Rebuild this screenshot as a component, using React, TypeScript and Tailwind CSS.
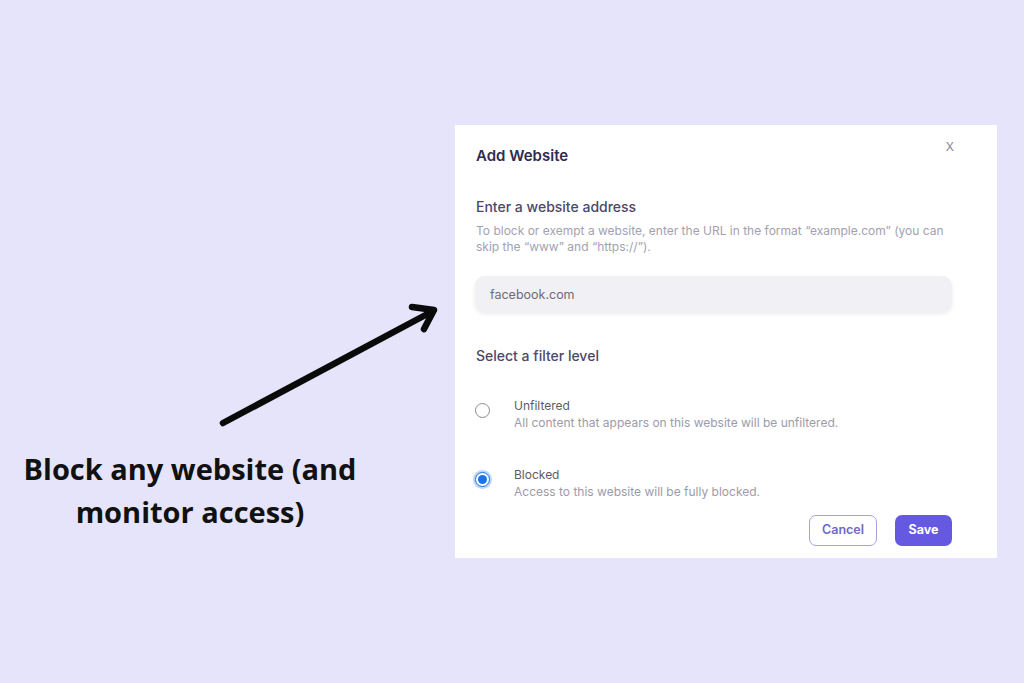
import { useState } from 'react'

interface FilterOption {
    id: string
    label: string
    description: string
}

const options: FilterOption[] = [
    { id: 'unfiltered', label: 'Unfiltered', description: 'All content that appears on this website will be unfiltered.' },
    { id: 'blocked', label: 'Blocked', description: 'Access to this website will be fully blocked.' }
]

function Radio({ checked }: { checked: boolean }) {
    if (checked) {
        return (
            <span className="flex items-center justify-center w-[15px] h-[15px] rounded-full border-[1.5px] border-[#1a73e8] bg-white ring-2 ring-[#bcd6fb]">
                <span className="w-[9px] h-[9px] rounded-full bg-[#1a73e8]" />
            </span>
        )
    }
    return <span className="block w-[15px] h-[15px] rounded-full border-[1.5px] border-[#8c8c94] bg-white" />
}

export default function App() {
    const [level, setLevel] = useState('blocked')
    const [url, setUrl] = useState('facebook.com')

    return (
        <div className="w-[1024px] h-[683px] bg-[#e6e4fa] flex overflow-hidden" style={{ fontFamily: 'Inter, "Noto Sans", sans-serif' }}>
            {/* Left: arrow + caption */}
            <div className="w-[455px] shrink-0 flex flex-col pt-[300px]">
                <svg width="455" height="132" viewBox="0 300 455 132" className="block">
                    <g stroke="#0a0a0a" strokeWidth="6.5" strokeLinecap="round" strokeLinejoin="round" fill="none">
                        <line x1="223" y1="423" x2="433" y2="311" />
                        <polyline points="412,307 434,310 424,329" />
                    </g>
                </svg>
                <p
                    className="w-[380px] mt-[15px] text-center text-[29px] leading-[43px] font-bold text-[#111]"
                    style={{ fontFamily: '"Open Sans", sans-serif' }}
                >
                    Block any website (and
                    <br />
                    monitor access)
                </p>
            </div>

            {/* Dialog */}
            <div className="mt-[125px] w-[542px] h-[433px] bg-white shrink-0 pl-[20px] pt-[20px]">
                <div className="w-[477px] flex flex-col">
                    <div className="flex items-start justify-between">
                        <h2 className="pl-[1px] text-[15px] leading-[22px] font-semibold text-[#2f2b4f]">Add Website</h2>
                        <button className="-mt-[5px] -mr-[2px] text-[12px] leading-[14px] text-[#8a8996]">X</button>
                    </div>

                    <h3 className="mt-[30px] pl-[1px] text-[14px] leading-[20px] font-medium text-[#4b4869]">
                        Enter a website address
                    </h3>
                    <p className="mt-[6px] pl-[1px] pr-[8px] text-[12px] leading-[16px] text-[#a3a1b0]">
                        To block or exempt a website, enter the URL in the format “example.com” (you can skip the “www” and “https://”).
                    </p>

                    <input
                        value={url}
                        onChange={(e) => setUrl(e.target.value)}
                        className="mt-[21px] h-[36px] w-full rounded-[10px] bg-[#f0f0f5] px-[15px] text-[12.5px] text-[#6e6c7c] shadow-[0_2px_4px_rgba(0,0,0,0.08)] outline-none"
                    />

                    <h3 className="mt-[34px] pl-[1px] text-[14px] leading-[20px] font-medium text-[#4b4869]">
                        Select a filter level
                    </h3>

                    {options.map((opt, i) => (
                        <label
                            key={opt.id}
                            onClick={() => setLevel(opt.id)}
                            className={`flex items-start cursor-pointer ${i === 0 ? 'mt-[31px]' : 'mt-[35px]'}`}
                        >
                            <span className="mt-[6px] w-[15px] flex justify-center">
                                <Radio checked={level === opt.id} />
                            </span>
                            <span className="ml-[24px] flex flex-col">
                                <span className="text-[12px] leading-[17px] text-[#5c5b68]">{opt.label}</span>
                                <span className="text-[12px] leading-[17px] text-[#9d9ba8]">{opt.description}</span>
                            </span>
                        </label>
                    ))}

                    <div className="mt-[15px] flex justify-end gap-[18px]">
                        <button className="h-[31px] w-[68px] rounded-[7px] border-[1.5px] border-[#a6a2dc] bg-white text-[12.5px] font-semibold text-[#6e69c6]">
                            Cancel
                        </button>
                        <button className="h-[31px] w-[57px] rounded-[7px] bg-[#6459e0] text-[12.5px] font-bold text-white">
                            Save
                        </button>
                    </div>
                </div>
            </div>
        </div>
    )
}
